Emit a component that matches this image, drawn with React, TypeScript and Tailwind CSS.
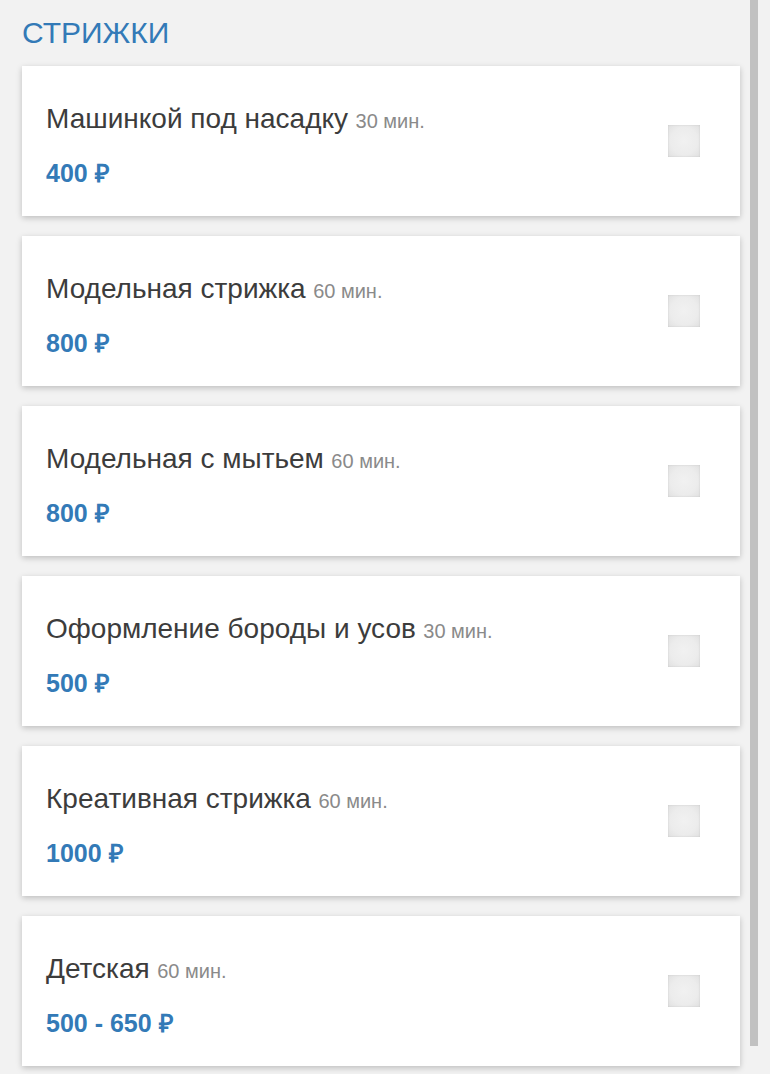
import React from "react";

type Service = {
  name: string;
  time: string;
  price: string;
};

const services: Service[] = [
  { name: "Машинкой под насадку", time: "30 мин.", price: "400 ₽" },
  { name: "Модельная стрижка", time: "60 мин.", price: "800 ₽" },
  { name: "Модельная с мытьем", time: "60 мин.", price: "800 ₽" },
  { name: "Оформление бороды и усов", time: "30 мин.", price: "500 ₽" },
  { name: "Креативная стрижка", time: "60 мин.", price: "1000 ₽" },
  { name: "Детская", time: "60 мин.", price: "500 - 650 ₽" },
];

const ServiceCard = ({ item }: { item: Service }) => {
  return (
    <div className="flex justify-between bg-white h-[150px] pl-6 pr-10 shadow-[0_2px_6px_rgba(0,0,0,0.22)]">
      <div className="flex flex-col gap-[19px] pt-[37px]">
        {/* Name + duration */}
        <div className="leading-[32px] whitespace-nowrap">
          <span className="text-[28px] text-[#3c3c3c]">{item.name}</span>{" "}
          <span className="ml-[3px] text-[20px] text-[#8a8a8a]">{item.time}</span>
        </div>
        {/* Price */}
        <div className="text-[25px] leading-[30px] font-bold text-[#337ab7]">{item.price}</div>
      </div>
      {/* Checkbox */}
      <div className="self-center w-8 h-8 bg-[radial-gradient(circle,#f1f1f1_0%,#ececec_60%,#e0e0e0_100%)] shadow-[inset_0_0_2px_rgba(0,0,0,0.12)]" />
    </div>
  );
};

export default function App() {
  return (
    <div className="flex min-h-[1074px] bg-[#f2f2f2] font-['Liberation_Sans',Arial,sans-serif]">
      <div className="w-[740px] pl-[22px] pt-[16px]">
        <h2 className="text-[30px] leading-[34px] text-[#337ab7] mb-[16px]">СТРИЖКИ</h2>
        <div className="flex flex-col gap-5">
          {services.map((s) => (
            <ServiceCard key={s.name} item={s} />
          ))}
        </div>
      </div>
      {/* Scrollbar thumb */}
      <div className="ml-[10px] w-2 h-[1046px] bg-[#c1c1c1]" />
    </div>
  );
}
